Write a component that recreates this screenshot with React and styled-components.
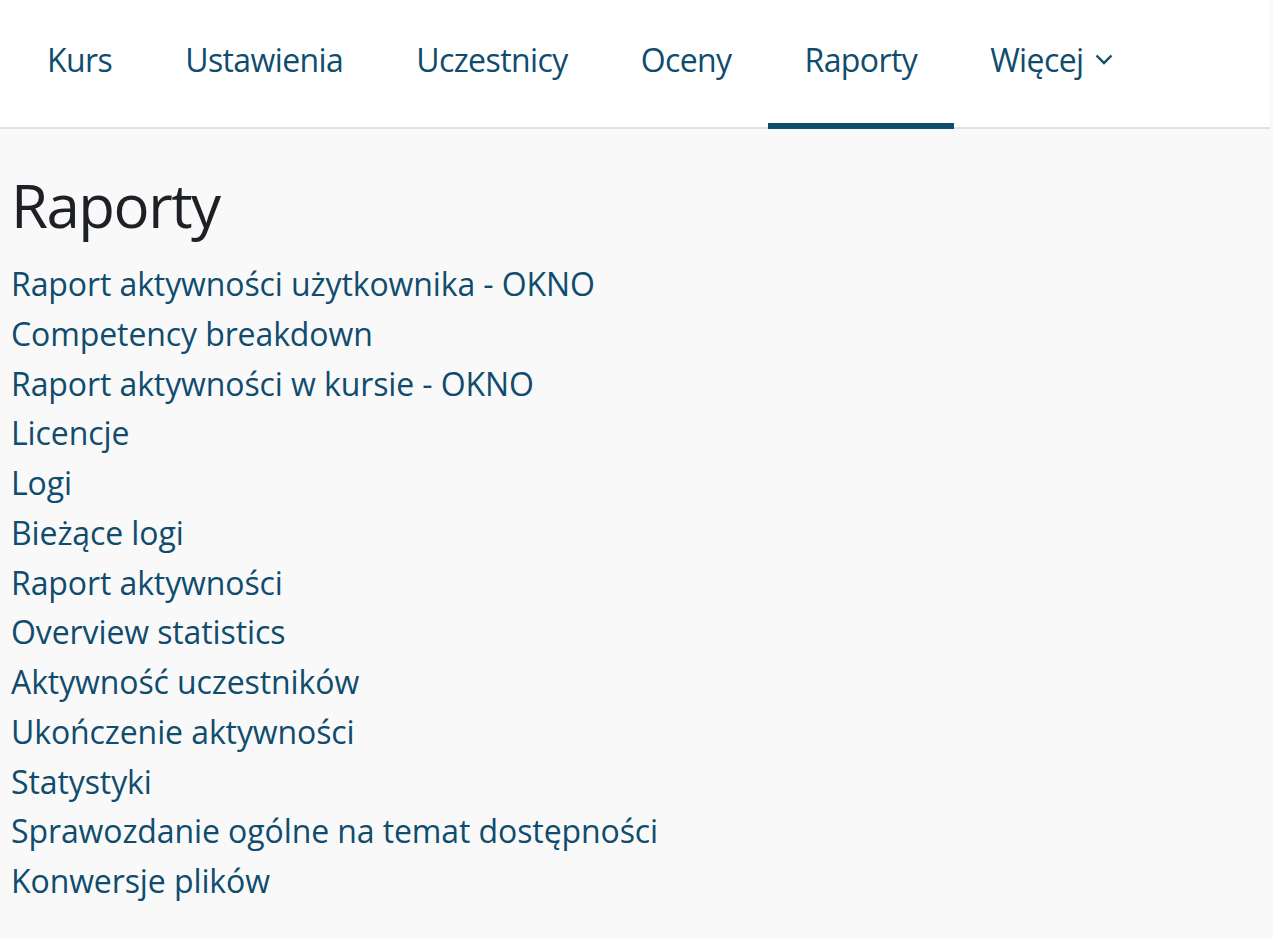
import React from 'react'
import styled, { createGlobalStyle } from 'styled-components'

const GlobalStyle = createGlobalStyle`
  html, body {
    margin: 0;
    padding: 0;
    background: #f9f9f9;
  }
  body {
    font-family: "Open Sans", "Noto Sans", sans-serif;
    color: #1d2125;
  }
`;

const Header = styled.nav`
  background: #fff;
  height: 127px;
  border-bottom: 2px solid #dee2e6;
  margin-right: 3px;
  padding-left: 10.5px;
  display: flex;
  align-items: stretch;
`;

const Tab = styled.a`
  position: relative;
  display: flex;
  align-items: center;
  gap: 11px;
  padding: 0 36.5px 8px;
  font-size: 32px;
  letter-spacing: -0.6px;
  color: #0f4c6e;
  text-decoration: none;
  cursor: pointer;

  ${p => p.active && `
    &::after {
      content: "";
      position: absolute;
      left: 0;
      right: 0;
      bottom: -2px;
      height: 6px;
      background: #0f4c6e;
    }
  `}
`;

const Chevron = () => (
  <svg width="18" height="11" viewBox="0 0 18 11" fill="none">
    <path d="M1.5 1.5 L9 9 L16.5 1.5" stroke="#0f4c6e" strokeWidth="2.4" />
  </svg>
);

const Main = styled.main`
  padding: 40px 11px 20px;
`;

const Title = styled.h2`
  margin: 0 0 18px;
  font-size: 60px;
  letter-spacing: -1.5px;
  font-weight: 400;
  line-height: 72px;
  color: #1d2125;
`;

const List = styled.ul`
  list-style: none;
  margin: 0;
  padding: 0;
`;

const Item = styled.li`
  font-size: 32px;
  letter-spacing: -0.1px;
  line-height: 49.75px;
`;

const Link = styled.a`
  color: #0f4c6e;
  text-decoration: none;
  cursor: pointer;
`;

const tabs = ['Kurs', 'Ustawienia', 'Uczestnicy', 'Oceny', 'Raporty'];

const reports = [
  'Raport aktywności użytkownika - OKNO',
  'Competency breakdown',
  'Raport aktywności w kursie - OKNO',
  'Licencje',
  'Logi',
  'Bieżące logi',
  'Raport aktywności',
  'Overview statistics',
  'Aktywność uczestników',
  'Ukończenie aktywności',
  'Statystyki',
  'Sprawozdanie ogólne na temat dostępności',
  'Konwersje plików',
];

export default function App() {
  return (
    <>
      <GlobalStyle />
      <Header>
        {tabs.map(t => (
          <Tab key={t} active={t === 'Raporty' ? 1 : 0}>{t}</Tab>
        ))}
        <Tab>Więcej <Chevron /></Tab>
      </Header>
      <Main>
        <Title>Raporty</Title>
        <List>
          {reports.map(r => (
            <Item key={r}><Link>{r}</Link></Item>
          ))}
        </List>
      </Main>
    </>
  );
}
